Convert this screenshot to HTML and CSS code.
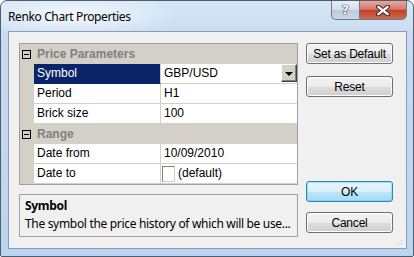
FILE: index.html
```html
<!DOCTYPE html>
<html>
<head>
<meta charset="utf-8">
<link rel="stylesheet" href="styles.css">
</head>
<body>
<div class="window">
  <div class="titlebar">
    <div class="title">Renko Chart Properties</div>
    <div class="caption-buttons">
      <div class="cap help">?</div>
      <div class="cap close">
        <svg width="14" height="11" viewBox="0 0 14 11"><path d="M2 1.5 L12 9.5 M12 1.5 L2 9.5" stroke="#3a3a3a" stroke-width="4.2" stroke-linecap="round"/><path d="M2.3 1.8 L11.7 9.2 M11.7 1.8 L2.3 9.2" stroke="#fff" stroke-width="2.2" stroke-linecap="round"/></svg>
      </div>
    </div>
  </div>
  <div class="client">
    <div class="left">
      <div class="grid">
        <div class="row header">
          <div class="gutter"><span class="minus"></span></div>
          <div class="htext">Price Parameters</div>
        </div>
        <div class="row">
          <div class="gutter"></div>
          <div class="label selected">Symbol</div>
          <div class="value">GBP/USD<span class="drop"><span class="tri"></span></span></div>
        </div>
        <div class="row">
          <div class="gutter"></div>
          <div class="label">Period</div>
          <div class="value">H1</div>
        </div>
        <div class="row">
          <div class="gutter"></div>
          <div class="label">Brick size</div>
          <div class="value">100</div>
        </div>
        <div class="row header">
          <div class="gutter"><span class="minus"></span></div>
          <div class="htext">Range</div>
        </div>
        <div class="row">
          <div class="gutter"></div>
          <div class="label">Date from</div>
          <div class="value">10/09/2010</div>
        </div>
        <div class="row">
          <div class="gutter"></div>
          <div class="label">Date to</div>
          <div class="value"><span class="check"></span>(default)</div>
        </div>
      </div>
      <div class="desc">
        <div class="desc-title">Symbol</div>
        <div class="desc-text">The symbol the price history of which will be use...</div>
      </div>
    </div>
    <div class="right">
      <div class="btn">Set as Default</div>
      <div class="btn reset">Reset</div>
      <div class="spacer"></div>
      <div class="btn ok">OK</div>
      <div class="btn cancel">Cancel</div>
    </div>
    <div class="grip"></div>
  </div>
</div>
</body>
</html>
```
FILE: styles.css
```css
html, body {
  margin: 0;
  padding: 0;
  background: #ffffff;
}
.window {
  width: 414px;
  height: 257px;
  box-sizing: border-box;
  border: 1px solid #4e5d6e;
  border-radius: 7px 7px 2px 2px;
  background: linear-gradient(180deg, #d7e6f6 0px, #c6dbf2 40px, #bcd5ef 100%);
  padding: 0 6px 7px 6px;
  display: flex;
  flex-direction: column;
  position: relative;
  overflow: hidden;
}
.titlebar {
  height: 30px;
  display: flex;
  justify-content: space-between;
  align-items: flex-start;
  background: radial-gradient(ellipse 110px 22px at 70px 15px, rgba(255,255,255,0.75), rgba(255,255,255,0) 100%);
  margin: 0 -6px;
  padding: 0 6px 0 7px;
}
.title {
  font-family: "Noto Sans", sans-serif;
  font-size: 12px;
  color: #000;
  margin-top: 7px;
  letter-spacing: -0.38px;
}
.caption-buttons {
  display: flex;
  margin-top: -1px;
  margin-right: 0px;
}
.cap {
  height: 20px;
  box-sizing: border-box;
  border: 1px solid #6b7a8c;
  display: flex;
  align-items: center;
  justify-content: center;
}
.help {
  width: 28px;
  border-radius: 0 0 0 5px;
  border-right: none;
  background: linear-gradient(180deg, #e7eef6 0%, #d3dfec 50%, #bccbdc 51%, #c9d6e5 100%);
  font-family: "DejaVu Sans", sans-serif;
  font-weight: bold;
  font-size: 12px;
  color: #fff;
  text-shadow: 0 0 1px #333, 0 0 1px #333, 0 0 1px #333;
}
.close {
  width: 48px;
  border-radius: 0 0 5px 0;
  background: linear-gradient(180deg, #e9a99c 0%, #d7796a 45%, #c4402b 52%, #cf6a4f 100%);
}
.client {
  flex: 1;
  border: 1px solid #8c9db3;
  background: #f0f0f0;
  display: flex;
  padding: 11px 0 0 10px;
  position: relative;
  margin-left: 1px;
}
.left {
  width: 279px;
  display: flex;
  flex-direction: column;
}
.grid {
  border: 1px solid #a0a0a0;
  background: #fff;
  font-family: "Liberation Sans", sans-serif;
  font-size: 12px;
}
.row {
  display: flex;
  height: 20px;
}
.gutter {
  width: 14px;
  background: #d4d0c8;
  flex: none;
  position: relative;
}
.label {
  width: 123px;
  flex: none;
  border-right: 1px solid #d4d0c8;
  border-bottom: 1px solid #d4d0c8;
  padding-left: 3px;
  line-height: 19px;
  color: #000;
}
.label.selected {
  background: #0a246a;
  color: #fff;
  border-bottom-color: #0a246a;
}
.value {
  flex: 1;
  border-bottom: 1px solid #d4d0c8;
  padding-left: 3px;
  line-height: 19px;
  color: #000;
  position: relative;
  display: flex;
  align-items: center;
}
.header {
  background: #d4d0c8;
}
.htext {
  font-weight: bold;
  color: #808080;
  padding-left: 3px;
  line-height: 20px;
}
.minus {
  position: absolute;
  left: 2px;
  top: 6px;
  width: 7px;
  height: 7px;
  border: 1px solid #000;
}
.minus::after {
  content: "";
  position: absolute;
  left: 1px;
  top: 3px;
  width: 5px;
  height: 1px;
  background: #000;
}
.drop {
  position: absolute;
  right: 0;
  top: 0;
  width: 16px;
  height: 18px;
  box-sizing: border-box;
  background: #d4d0c8;
  border: 1px solid;
  border-color: #fff #404040 #404040 #fff;
  box-shadow: inset -1px -1px 0 #808080;
  display: flex;
  align-items: center;
  justify-content: center;
}
.tri {
  width: 0;
  height: 0;
  border-left: 4px solid transparent;
  border-right: 4px solid transparent;
  border-top: 4px solid #000;
  margin-top: 1px;
}
.check {
  width: 13px;
  height: 16px;
  box-sizing: border-box;
  border: 1px solid;
  border-color: #808080 #d4d0c8 #d4d0c8 #808080;
  background: #fff;
  margin-right: 3px;
  margin-left: -2px;
}
.desc {
  margin-top: 9px;
  height: 43px;
  box-sizing: border-box;
  border: 1px solid #a0a0a0;
  padding: 2px 0 0 5px;
  font-family: "Noto Sans", sans-serif;
  font-size: 12px;
  color: #000;
  letter-spacing: -0.32px;
}
.desc-title {
  font-weight: bold;
  line-height: 17px;
}
.desc-text {
  line-height: 19px;
}
.right {
  margin-left: 8px;
  width: 87px;
  display: flex;
  flex-direction: column;
}
.btn {
  height: 21px;
  box-sizing: border-box;
  border: 1px solid #707070;
  border-radius: 3px;
  background: linear-gradient(180deg, #f4f4f4 0%, #ebebeb 50%, #dddddd 51%, #cfcfcf 100%);
  box-shadow: inset 0 0 0 1px #fcfcfc;
  font-family: "Liberation Sans", sans-serif;
  font-size: 12px;
  color: #000;
  display: flex;
  align-items: center;
  justify-content: center;
  letter-spacing: -0.2px;
}
.reset {
  margin-top: 12px;
}
.spacer {
  flex: none;
  height: 84px;
}
.ok {
  border-color: #3c7fb1;
  background: linear-gradient(180deg, #eaf6fd 0%, #d9f0fc 50%, #bee6fd 51%, #a7d9f5 100%);
  box-shadow: inset 0 0 0 1px #48d8fb80;
}
.cancel {
  margin-top: 10px;
}
.grip {
  position: absolute;
  right: 2px;
  bottom: 2px;
  width: 10px;
  height: 10px;
  background:
    radial-gradient(circle, #b8b8b8 0.9px, transparent 1px) 0 0 / 3px 3px;
  clip-path: polygon(100% 0, 100% 100%, 0 100%);
}
```
